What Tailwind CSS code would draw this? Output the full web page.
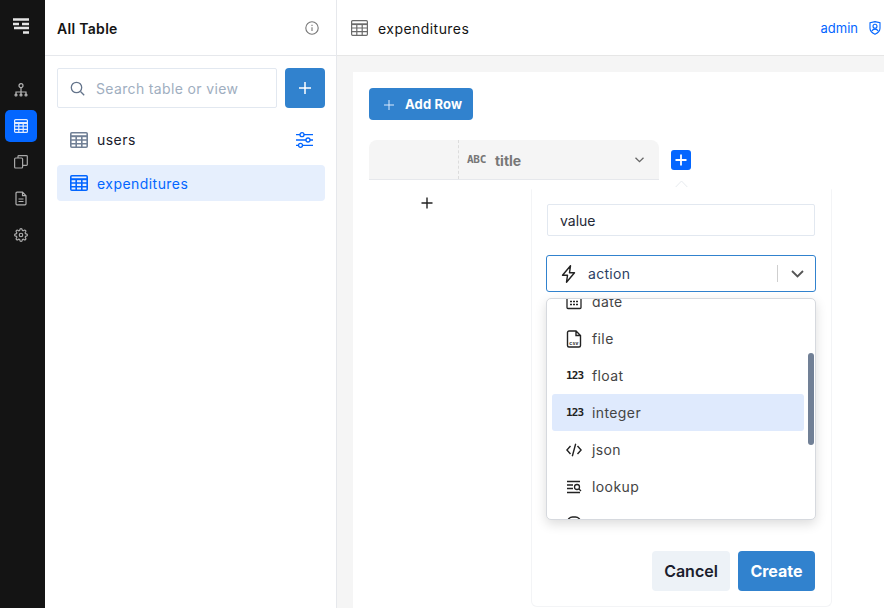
<!DOCTYPE html>
<html>
<head>
<meta charset="utf-8">
<script src="https://cdn.jsdelivr.net/npm/@tailwindcss/browser@4"></script>
</head>
<body class="m-0 overflow-hidden bg-white font-['Inter',sans-serif]">
<div class="flex h-[608px] w-[884px] overflow-hidden">
  <!-- rail -->
  <nav class="flex w-[45px] shrink-0 flex-col items-center bg-[#141414] pr-[3px]">
    <svg class="mt-[18px] h-4 w-4" viewBox="0 0 16 16" fill="none"><path d="M0 1.500h16M0 6h6M9 6h7M1 10h15M10 14.500h6" stroke="#e5e5e5" stroke-width="2.400"/></svg>
    <svg class="mt-[49px] h-[14px] w-[14px]" viewBox="0 0 14 14" fill="none" stroke="#b5b5b5" stroke-width="1.200"><circle cx="7" cy="2.700" r="2"/><path d="M7 4.700V9M2 12V9h10v3M7 9v3"/><circle cx="2" cy="12" r="1"/><circle cx="7" cy="12" r="1"/><circle cx="12" cy="12" r="1"/></svg>
    <div class="mt-[13px] flex h-8 w-8 items-center justify-center rounded-[5px] bg-[#0366ff]">
      <svg class="h-[14px] w-[14px]" viewBox="0 0 14 14" fill="none" stroke="#e3edff" stroke-width="1.200"><rect x=".6" y=".6" width="12.800" height="12.800" rx="1"/><path d="M.6 4h12.800" stroke-width="2"/><path d="M.6 7.200h12.800M.6 10.300h12.800M4.800 4v9.400M9.200 4v9.400"/></svg>
    </div>
    <svg class="mt-[13px] h-[14px] w-[14px]" viewBox="0 0 14 14" fill="none" stroke="#a8a8a8" stroke-width="1.200"><rect x=".6" y="3" width="8" height="10" rx="1"/><path d="M4 3V1.500a.8.800 0 0 1 .8-.8h7.700a.8.800 0 0 1 .8.800v8a.8.800 0 0 1-.8.800H8.600"/></svg>
    <svg class="mt-[22px] h-[15px] w-[14px]" viewBox="0 0 14 14" fill="none" stroke="#b0b0b0" stroke-width="1.200"><path d="M8.500.7H3a1 1 0 0 0-1 1v10.600a1 1 0 0 0 1 1h8a1 1 0 0 0 1-1V4.200zM8.500.7v3.500H12M4.500 7.500h5M4.500 10h5"/></svg>
    <svg class="mt-[22px] h-[14px] w-[14px]" viewBox="0 0 24 24" fill="none" stroke="#b0b0b0" stroke-width="2" stroke-linecap="round" stroke-linejoin="round"><circle cx="12" cy="12" r="3"/><path d="M19.400 15a1.650 1.650 0 0 0 .33 1.820l.06.06a2 2 0 1 1-2.830 2.830l-.06-.06a1.650 1.650 0 0 0-2.820 1.170V21a2 2 0 1 1-4 0v-.09a1.650 1.650 0 0 0-2.900-1.170l-.06.06a2 2 0 1 1-2.830-2.830l.06-.06A1.650 1.650 0 0 0 3.090 14H3a2 2 0 1 1 0-4h.09a1.650 1.650 0 0 0 1.170-2.900l-.06-.06a2 2 0 1 1 2.830-2.830l.06.06A1.650 1.650 0 0 0 10 3.090V3a2 2 0 1 1 4 0v.09a1.650 1.650 0 0 0 2.820 1.170l.06-.06a2 2 0 1 1 2.830 2.830l-.06.06A1.650 1.650 0 0 0 20.910 10H21a2 2 0 1 1 0 4h-.09a1.650 1.650 0 0 0-1.510 1z"/></svg>
  </nav>

  <!-- sidebar -->
  <aside class="flex w-[292px] shrink-0 flex-col border-r border-[#e6e8ec]">
    <div class="flex h-[56px] shrink-0 items-center justify-between border-b border-[#e6e8ec] pl-3 pr-[17px]">
      <span class="pt-[2px] text-sm font-semibold tracking-[.3px] text-[#141414]">All Table</span>
      <svg class="h-[14px] w-[14px]" viewBox="0 0 14 14" fill="none" stroke="#777" stroke-width="1.100"><circle cx="7" cy="7" r="6.200"/><path d="M7 6.300v3.700M7 3.800v1.100"/></svg>
    </div>
    <div class="flex w-[292px] gap-2 pl-3 pt-3">
      <div class="flex h-10 w-[220px] shrink-0 items-center rounded-[2px] border border-[#e2e8f0] pl-3">
        <svg class="h-[15px] w-[15px]" viewBox="0 0 15 15" fill="none" stroke="#64748b" stroke-width="1.300"><circle cx="6.500" cy="6.500" r="5.200"/><path d="m10.500 10.500 3.700 3.700"/></svg>
        <span class="ml-[11px] pt-[2px] text-sm tracking-[.35px] text-[#a0aec0]">Search table or view</span>
      </div>
      <button class="flex h-10 w-10 shrink-0 items-center justify-center rounded-[4px] bg-[#3182ce]">
        <svg class="h-3 w-3" viewBox="0 0 12 12" stroke="#fff" stroke-width="1.500"><path d="M6 0v12M0 6h12"/></svg>
      </button>
    </div>
    <div class="ml-3 mt-[14px] flex h-9 w-[268px] items-center pl-[13px] pr-[12px]">
      <svg class="h-4 w-[18px]" viewBox="0 0 18 16" fill="none" stroke="#718096" stroke-width="1.600"><rect x=".8" y=".8" width="16.400" height="14.400" rx="1"/><path d="M.8 4.200h16.400" stroke-width="2"/><path d="M.8 8h16.400M.8 11.700h16.400M6.200 4.200v11M11.800 4.200v11"/></svg>
      <span class="ml-[9px] flex-1 text-sm tracking-[.45px] text-[#1a202c]">users</span>
      <svg class="h-4 w-[17px]" viewBox="0 0 17 16" fill="none" stroke="#0366ff" stroke-width="1.300"><path d="M0 2.700h4M8 2.700h9M0 8h10M14 8h3M0 13.300h2.500M6.500 13.300H17"/><circle cx="6" cy="2.700" r="2"/><circle cx="12" cy="8" r="2"/><circle cx="4.500" cy="13.300" r="2"/></svg>
    </div>
    <div class="ml-3 mt-[7px] flex h-9 w-[268px] items-center rounded-[4px] bg-[#e6effd] pl-[13px]">
      <svg class="h-4 w-[18px]" viewBox="0 0 18 16" fill="none" stroke="#0366ff" stroke-width="1.600"><rect x=".8" y=".8" width="16.400" height="14.400" rx="1"/><path d="M.8 4.200h16.400" stroke-width="2"/><path d="M.8 8h16.400M.8 11.700h16.400M6.200 4.200v11M11.800 4.200v11"/></svg>
      <span class="ml-[9px] pt-[2px] text-sm tracking-[.45px] text-[#0366ff]">expenditures</span>
    </div>
  </aside>

  <!-- main -->
  <main class="flex min-w-0 flex-1 flex-col bg-[#f5f5f5]">
    <header class="flex h-[56px] shrink-0 items-center justify-between border-b border-[#e6e6e6] bg-white pl-[14px]">
      <div class="flex items-center">
        <svg class="h-4 w-[17px]" viewBox="0 0 17 16" fill="none" stroke="#6b6b6b" stroke-width="1.200"><rect x=".6" y=".7" width="15.800" height="14.600" rx="1"/><path d="M.6 4.200h15.800" stroke-width="1.800"/><path d="M.6 8h15.800M.6 11.700h15.800M5.800 4.200v11M11.200 4.200v11"/></svg>
        <span class="ml-[10px] pt-[2px] text-sm tracking-[.45px] text-[#141414]">expenditures</span>
      </div>
      <div class="flex items-center pr-[3px]">
        <span class="pt-[2px] text-[13px] tracking-[0px] text-[#0366ff]">admin</span>
        <svg class="ml-[11px] h-[14px] w-[12px]" viewBox="0 0 12 14" fill="none" stroke="#0366ff" stroke-width="1.100"><path d="M1 1.800 6 .6l5 1.200v5.500c0 2.800-2.200 4.700-5 6-2.800-1.300-5-3.200-5-6z"/><circle cx="6" cy="5.300" r="2"/><path d="M2.800 10c.7-1.300 1.800-1.900 3.200-1.900s2.500.6 3.200 1.900"/></svg>
      </div>
    </header>
    <div class="flex flex-1 pl-4 pt-4">
      <section class="relative flex-1 bg-white pl-4 pt-4">
        <button class="flex h-8 w-[104px] items-center rounded-[4px] bg-[#3182ce] pl-[15px] pt-[1px] text-[13px] font-bold tracking-[.15px] text-white">
          <svg class="mr-[11px] h-[10px] w-[10px]" viewBox="0 0 10 10" stroke="#dbeafe" stroke-width="1"><path d="M5 0v10M0 5h10"/></svg>Add Row
        </button>
        <div class="mt-[20px] flex items-start">
          <div class="flex h-10 w-[290px] rounded-t-[8px] border-b border-[#e6e8ec] bg-[#f5f5f5]">
            <div class="w-[90px] border-r border-dashed border-[#dcdcdc]"></div>
            <div class="flex flex-1 items-center pl-[8px] pr-[15px]">
              <span class="pt-[2px] font-['DejaVu_Sans_Mono',monospace] text-[11px] font-bold tracking-[-.3px] text-[#777]">ABC</span>
              <span class="ml-[9px] flex-1 pt-[3px] text-sm font-bold text-[#777]">title</span>
              <svg class="h-[6px] w-[9px]" viewBox="0 0 9 6" fill="none" stroke="#666" stroke-width="1.300"><path d="m.5.700 4 4 4-4"/></svg>
            </div>
          </div>
          <button class="ml-3 mt-[10px] flex h-5 w-5 items-center justify-center rounded-[3px] bg-[#0366ff]">
            <svg class="h-3 w-3" viewBox="0 0 12 12" stroke="#fff" stroke-width="1.800"><path d="M6 .5v11M.5 6h11"/></svg>
          </button>
        </div>
        <div class="ml-[52px] mt-[17px] h-3 w-3">
          <svg class="h-3 w-3" viewBox="0 0 12 12" stroke="#222" stroke-width="1.400"><path d="M6 .5v11M.5 6h11"/></svg>
        </div>

        <!-- popover -->
        <svg class="absolute left-[322px] top-[108px] h-[8px] w-[13px]" viewBox="0 0 13 8" fill="none" stroke="#e6eaee" stroke-width="1"><path d="m.7 7 5.800-6 5.800 6"/></svg>
        <div class="absolute left-[178px] top-[117px] flex h-[418px] w-[301px] flex-col rounded-b-[6px] border border-[#f3f4f6] border-t-transparent bg-white pl-[15px] pr-4 pt-[14px]">
          <div class="flex h-8 w-[268px] items-center rounded-[2px] border border-[#e2e8f0] pl-3 pt-[2px] text-sm text-[#1f2937]">value</div>
          <div class="-ml-px mt-[19px] flex h-[37px] w-[270px] items-center rounded-[3px] border border-[#3182ce] pl-[14px] pr-[11px]">
            <svg class="h-[18px] w-[15px]" viewBox="0 0 15 18" fill="none" stroke="#222" stroke-width="1.400" stroke-linejoin="round"><path d="M9.500.8 1.500 10.300h5l-1 6.900 8-9.500h-5z"/></svg>
            <span class="ml-[12px] flex-1 text-sm tracking-[.3px] text-[#2d3f63]">action</span>
            <span class="h-[17px] w-px bg-[#cfcfcf]"></span>
            <svg class="ml-[13px] h-2 w-[13px]" viewBox="0 0 13 8" fill="none" stroke="#555" stroke-width="1.800"><path d="m1 1 5.500 5.500L12 1"/></svg>
          </div>
          <div class="flex-1"></div>
          <div class="mb-[15px] flex justify-end gap-2">
            <button class="h-10 w-[78px] rounded-[4px] bg-[#edf2f7] text-base font-semibold text-[#1a202c]">Cancel</button>
            <button class="h-10 w-[77px] rounded-[4px] bg-[#3182ce] text-base font-bold text-white">Create</button>
          </div>
        </div>

        <!-- dropdown -->
        <div class="absolute left-[193px] top-[226px] z-10 h-[222px] w-[270px] overflow-hidden rounded-[5px] border border-[#d6d9de] bg-white shadow-[0_4px_12px_rgba(0,0,0,.14)]">
          <div class="relative -mt-[16px] flex flex-col pl-[5px] pr-[11px] text-sm tracking-[.4px] text-[#444]">
            <div class="flex h-[37px] shrink-0 items-center pl-[14px]">
              <svg class="h-4 w-4" viewBox="0 0 16 16" fill="none" stroke="#222" stroke-width="1.300"><rect x="1" y="2" width="14" height="12.500" rx="1"/><path d="M1 3.500h14" stroke-width="2"/><path d="M4 7.500h2M7 7.500h2M10 7.500h2M4 10.500h2M7 10.500h2M10 10.500h2" stroke-width="1.400"/></svg>
              <span class="ml-[10px]">date</span>
            </div>
            <div class="flex h-[37px] shrink-0 items-center pl-[14px]">
              <svg class="h-[18px] w-4" viewBox="0 0 16 18" fill="none" stroke="#222" stroke-width="1.400"><path d="M10 1H3a1.500 1.500 0 0 0-1.500 1.500v13A1.500 1.500 0 0 0 3 17h10a1.500 1.500 0 0 0 1.500-1.500V5.500zM10 1v4.500h4.500"/><text x="8" y="14.500" text-anchor="middle" font-size="5" font-weight="700" font-family="'Liberation Sans',sans-serif" fill="#222" stroke="none">csv</text></svg>
              <span class="ml-[10px]">file</span>
            </div>
            <div class="flex h-[37px] shrink-0 items-center pl-[14px]">
              <span class="w-4 font-['DejaVu_Sans_Mono',monospace] text-[11px] font-bold tracking-[-.9px] text-[#222]">123</span>
              <span class="ml-[10px]">float</span>
            </div>
            <div class="flex h-[37px] shrink-0 items-center rounded-[3px] bg-[#dfeafd] pl-[14px]">
              <span class="w-4 font-['DejaVu_Sans_Mono',monospace] text-[11px] font-bold tracking-[-.9px] text-[#222]">123</span>
              <span class="ml-[10px]">integer</span>
            </div>
            <div class="flex h-[37px] shrink-0 items-center pl-[14px]">
              <svg class="h-[14px] w-4" viewBox="0 0 16 14" fill="none" stroke="#222" stroke-width="1.400"><path d="M4.500 3 .9 7l3.600 4M11.500 3 15.100 7l-3.600 4M9.700.7 6.300 13.300"/></svg>
              <span class="ml-[10px]">json</span>
            </div>
            <div class="flex h-[37px] shrink-0 items-center pl-[14px]">
              <svg class="h-[14px] w-4" viewBox="0 0 16 14" fill="none" stroke="#222" stroke-width="1.300"><path d="M1 1.500h13M1 5h6M1 8.500h6M1 12.500h13" stroke-width="1.400"/><circle cx="11" cy="7" r="2.500"/><path d="m13 9 2 2"/></svg>
              <span class="ml-[10px]">lookup</span>
            </div>
            <div class="flex h-[37px] shrink-0 items-center pl-[14px]">
              <svg class="h-4 w-4" viewBox="0 0 16 16" fill="none" stroke="#222" stroke-width="1.300"><rect x="1.500" y="1" width="13" height="14" rx="5"/></svg>
              <span class="ml-[10px] text-[#bbb]">qq</span>
            </div>
          </div>
          <div class="absolute left-[261px] top-[54px] h-[92px] w-[6px] rounded-full bg-[#718096]"></div>
        </div>
      </section>
    </div>
  </main>
</div>
</body>
</html>
